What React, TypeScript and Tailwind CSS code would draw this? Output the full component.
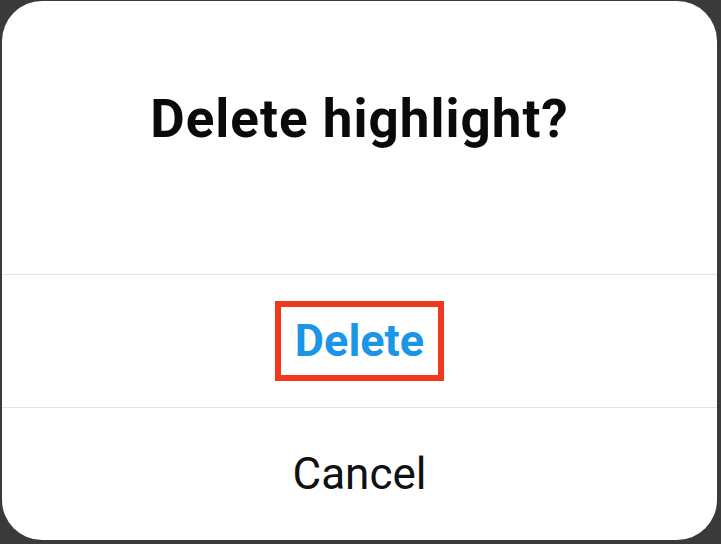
import React from 'react';

const App = () => {
  return (
    <div className="w-[721px] h-[544px] bg-[#3a3a3a] pt-[1px] pl-[2px] pr-[4px] pb-[4px] font-['Roboto',sans-serif]">
      <section className="w-full h-full bg-white rounded-[40px] flex flex-col overflow-hidden">
        <div className="h-[273px] flex justify-center pt-[86px]">
          <h2 className="text-[53px] leading-[64px] tracking-[1px] font-bold text-[#0a0a0a]">Delete highlight?</h2>
        </div>
        <div className="h-[133px] border-t border-[#e3e3e3] flex items-center justify-center">
          <button className="border-[6px] border-[#ef381c] px-[14px] h-[80px] flex items-center">
            <span className="text-[45px] font-bold text-[#1b95e6]">Delete</span>
          </button>
        </div>
        <div className="flex-1 border-t border-[#e3e3e3] flex items-center justify-center">
          <span className="text-[44px] text-[#111]">Cancel</span>
        </div>
      </section>
    </div>
  );
};

export default App;
